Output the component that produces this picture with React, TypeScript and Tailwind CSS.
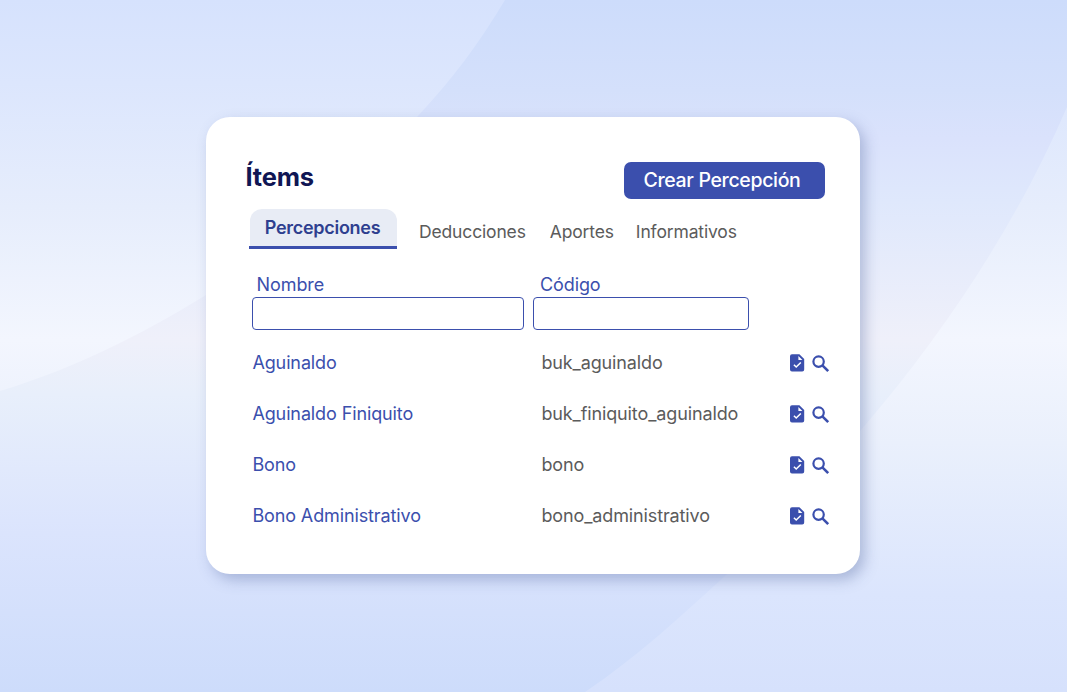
const tabs = [
  { label: "Deducciones", className: "ml-[22px]" },
  { label: "Aportes", className: "ml-[24px]" },
  { label: "Informativos", className: "ml-[22px]" },
];

const items = [
  { name: "Aguinaldo", code: "buk_aguinaldo" },
  { name: "Aguinaldo Finiquito", code: "buk_finiquito_aguinaldo" },
  { name: "Bono", code: "bono" },
  { name: "Bono Administrativo", code: "bono_administrativo" },
];

function Background() {
  return (
    <svg
      className="absolute inset-0 h-full w-full"
      viewBox="0 0 1067 692"
      preserveAspectRatio="none"
      aria-hidden="true"
    >
      <defs>
        <linearGradient id="wave" gradientUnits="userSpaceOnUse" x1="0" y1="0" x2="0" y2="692">
          <stop offset="0" stopColor="#d6e2fd" />
          <stop offset="0.12" stopColor="#dce6fd" />
          <stop offset="0.3" stopColor="#e6edfc" />
          <stop offset="0.49" stopColor="#f3f6fe" />
          <stop offset="0.64" stopColor="#eaf0fc" />
          <stop offset="0.86" stopColor="#dbe5fd" />
          <stop offset="1" stopColor="#d6e1fc" />
        </linearGradient>
      </defs>
      <path fill="url(#wave)" d="M0 0H505C480 42 452 80 417 117C350 192 290 246 206 295C140 336 70 370 0 391Z" />
      <path fill="url(#wave)" d="M1067 107C1020 217 948 329 861 430C820 484 775 535 726 575C680 617 637 657 585 692H1067Z" />
    </svg>
  );
}

function FileCheckIcon() {
  return (
    <svg className="mt-px" width="15" height="18" viewBox="0 0 15 18" aria-hidden="true">
      <path
        fill="#3b4fad"
        fillRule="evenodd"
        d="M2 0.2H9.4L14.2 5V15.6A2 2 0 0 1 12.2 17.6H2A2 2 0 0 1 0 15.6V2.2A2 2 0 0 1 2 0.2ZM8.4 2V6H12.4Z"
      />
      <path d="M3.9 10.8L6.2 13L10.8 8.5" fill="none" stroke="white" strokeWidth="1.5" />
    </svg>
  );
}

function SearchIcon() {
  return (
    <svg className="mt-[3px] ml-[6.6px]" width="18" height="18" viewBox="0 0 18 18" fill="none" stroke="#3b4fad" aria-hidden="true">
      <circle cx="6.6" cy="6.6" r="5.2" strokeWidth="2.2" />
      <path d="M10.4 10.4L16.2 16.2" strokeWidth="2.6" />
    </svg>
  );
}

export default function App() {
  return (
    <main className="relative flex h-[692px] w-[1067px] overflow-hidden bg-[linear-gradient(180deg,#cddcfb_0%,#d4e0fb_13%,#dae2fc_20%,#dfe8fc_29%,#eff0fa_49%,#e8effb_57%,#dbe4fd_77%,#cddcfb_100%)] font-['Inter',sans-serif]">
      <Background />

      <section className="relative mt-[117px] ml-[206.4px] h-[457.4px] w-[654px] rounded-[24px] bg-white shadow-[5px_6px_14px_rgba(70,90,150,0.34)]">
        <header className="flex items-start justify-between pt-[44.6px] pr-[35.4px] pl-[39.1px]">
          <h1 className="text-[25.5px] leading-[30px] font-bold tracking-[-0.2px] text-[#101654]">
            Ítems
          </h1>
          <button className="h-[37.5px] w-[201px] rounded-[7px] bg-[#3b4fad] pr-[5px] text-[19.5px] font-medium tracking-[-0.34px] text-white">
            Crear Percepción
          </button>
        </header>

        <nav className="mt-[9.9px] ml-[42.6px] flex text-[17.5px] tracking-[-0.15px] text-[#5b5b5b]">
          <div className="h-[40px] w-[148px]">
            <div className="ml-px h-[36.6px] rounded-t-[12px] bg-[#e8ecf5] pr-[2px] text-center text-[18px] leading-[38px] font-semibold tracking-[-0.28px] text-[#2e3f8f]">
              Percepciones
            </div>
            <div className="h-[3px] bg-[#3b4fad]" />
          </div>
          {tabs.map((tab) => (
            <a key={tab.label} className={`h-[40px] leading-[45px] ${tab.className}`}>
              {tab.label}
            </a>
          ))}
        </nav>

        <div className="mt-[23px] ml-[45.6px] flex gap-[9px] text-[18px] tracking-[-0.1px] text-[#3b4fad]">
          <label className="w-[272px]">
            <span className="block pl-[4.6px] leading-[25px]">Nombre</span>
            <input className="block h-[33.5px] w-full rounded-[4px] border border-[#3b4fad]" />
          </label>
          <label className="w-[216px]">
            <span className="block pl-[7px] leading-[25px]">Código</span>
            <input className="block h-[33.5px] w-full rounded-[4px] border border-[#3b4fad]" />
          </label>
        </div>

        <ul className="mt-[6.6px] ml-[46px] text-[18px] tracking-[-0.12px]">
          {items.map((item) => (
            <li key={item.code} className="flex h-[51px] items-center">
              <span className="w-[289px] text-[#3b4fad]">{item.name}</span>
              <span className="w-[248.6px] text-[#5b5b5b]">{item.code}</span>
              <FileCheckIcon />
              <SearchIcon />
            </li>
          ))}
        </ul>
      </section>
    </main>
  );
}
